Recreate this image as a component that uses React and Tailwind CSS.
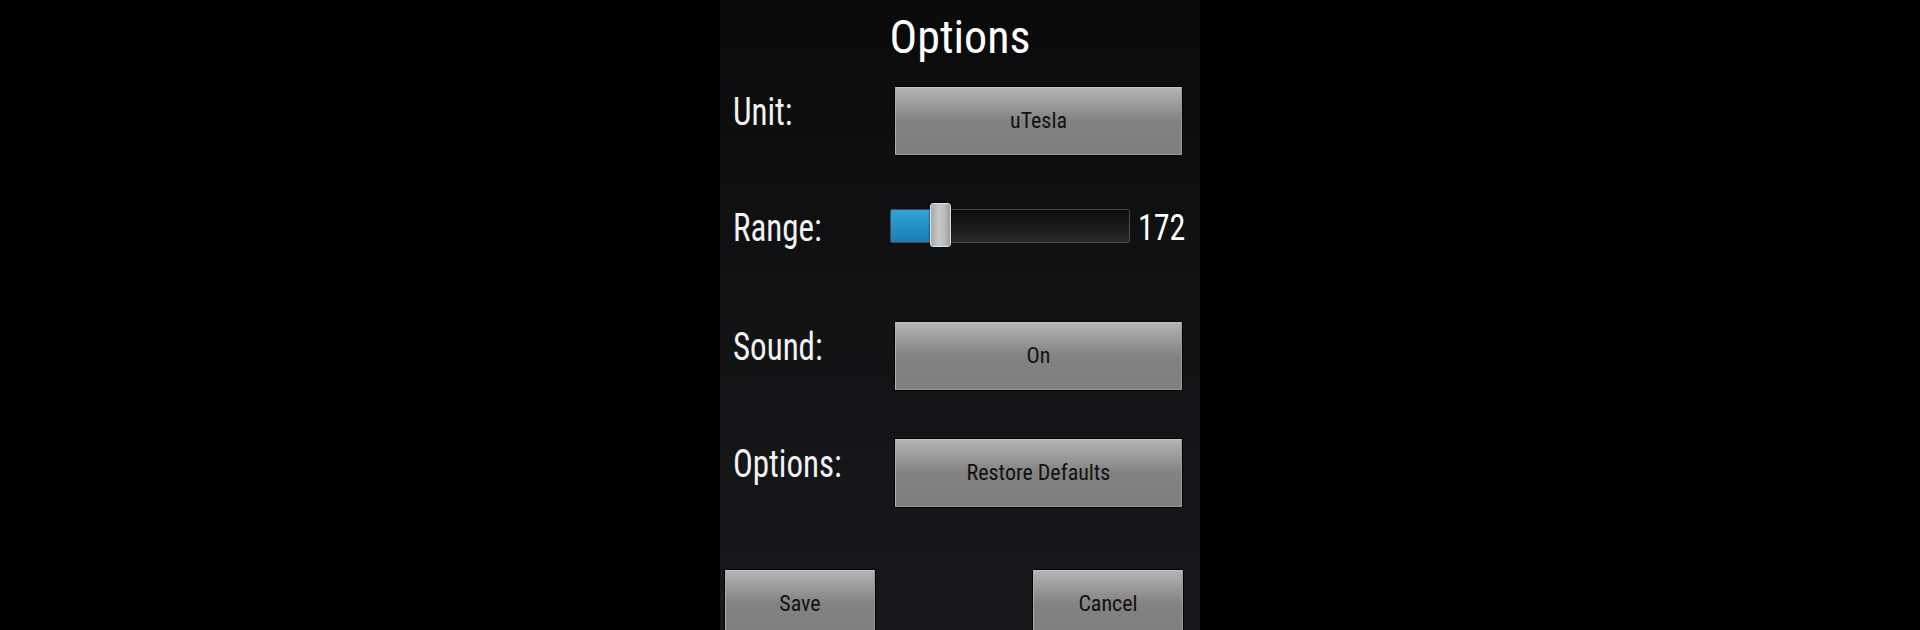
import React from "react";

const font = { fontFamily: '"Roboto Condensed", "Liberation Sans Narrow", "DejaVu Sans Condensed", sans-serif' };

function Btn({ children, className = "" }) {
  return (
    <div
      className={
        "h-[68px] shrink-0 flex items-center justify-center border border-[#9a9a9a] border-t-[#c4c4c4] border-l-[#b0b0b0] bg-[linear-gradient(to_bottom,#b4b4b4_0%,#9a9a9a_25%,#828282_50%,#7f7f7f_100%)] shadow-[0_0_0_1px_#000] text-[22px] text-[#111111] leading-none " +
        className
      }
    >
      {children}
    </div>
  );
}

function Label({ children }) {
  return (
    <div className="w-[162px] shrink-0 pl-[13px] text-[33px] leading-none text-[#f2f2f2] mt-[5px] scale-y-[1.18] origin-top">
      {children}
    </div>
  );
}

export default function App() {
  return (
    <div className="w-[1920px] h-[630px] bg-black overflow-hidden flex justify-center" style={font}>
      <div className="w-[480px] h-[630px] overflow-hidden bg-[linear-gradient(to_bottom,#0a0a0b_0%,#101113_40%,#17191c_100%)] flex flex-col">
        <div className="shrink-0 pt-[14px] text-center text-[46px] leading-none text-white h-[87px]">Options</div>

        <div className="shrink-0 flex items-start h-[68px]">
          <Label>Unit:</Label>
          <Btn className="w-[287px] ml-[13px]">uTesla</Btn>
        </div>

        <div className="shrink-0 flex items-start mt-[48px] h-[44px]">
          <Label>Range:</Label>
          <div className="relative shrink-0 ml-[8px] mt-[6px] w-[240px] h-[34px] border border-[#4a4a4a] rounded-[2px] bg-[linear-gradient(to_bottom,#0c0c0d,#1a1a1b_50%,#2a2a2b)]">
            <div className="absolute left-0 top-0 bottom-0 w-[42px] bg-[linear-gradient(to_bottom,#2fa4dc,#1b7eb4)] rounded-l-[1px]" />
            <div className="absolute left-[39px] top-[-7px] w-[21px] h-[44px] rounded-[3px] border border-[#e0e0e0] bg-[linear-gradient(to_right,#a8a8a8,#c8c8c8_40%,#bdbdbd_70%,#9c9c9c)] shadow-[0_0_2px_#000]" />
          </div>
          <div className="ml-[8px] mt-[5px] text-[32px] leading-none text-white scale-y-[1.18] origin-top">172</div>
        </div>

        <div className="shrink-0 flex items-start mt-[75px] h-[68px]">
          <Label>Sound:</Label>
          <Btn className="w-[287px] ml-[13px]">On</Btn>
        </div>

        <div className="shrink-0 flex items-start mt-[49px] h-[68px]">
          <Label>Options:</Label>
          <Btn className="w-[287px] ml-[13px]">Restore Defaults</Btn>
        </div>

        <div className="shrink-0 flex justify-between mt-[63px] pl-[5px] pr-[17px]">
          <Btn className="w-[150px]">Save</Btn>
          <Btn className="w-[150px]">Cancel</Btn>
        </div>
      </div>
    </div>
  );
}
